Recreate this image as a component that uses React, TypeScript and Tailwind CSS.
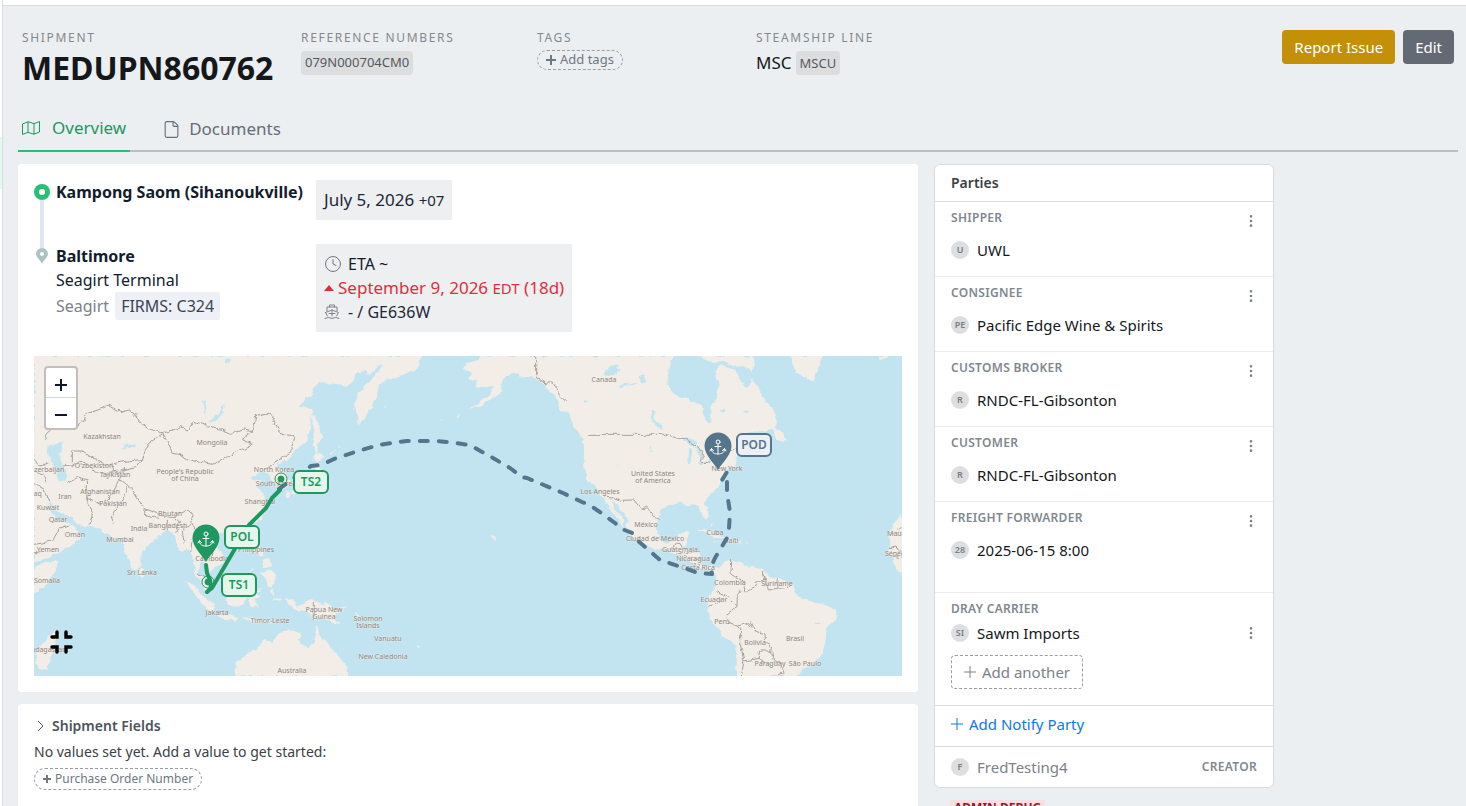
import { ReactNode } from "react";
import { Clock, EllipsisVertical, File } from "lucide-react";

const parties = [
  { role: "Shipper", initials: "U", name: "UWL" },
  { role: "Consignee", initials: "PE", name: "Pacific Edge Wine & Spirits" },
  { role: "Customs Broker", initials: "R", name: "RNDC-FL-Gibsonton" },
  { role: "Customer", initials: "R", name: "RNDC-FL-Gibsonton" },
  { role: "Freight Forwarder", initials: "28", name: "2025-06-15 8:00", tall: true },
];

// Geography is drawn on a 2604 x 960 grid, three units to a map pixel
const land = [
  // Eurasia
  "M-20,-20 1163,-20 1163,5 1158,28 1120,50 1078,67 1038,82 1028,107 1026,132 1013,150 993,187 975,207 968,177 963,142 973,107 993,87 1018,67 1038,42 1046,25 1028,32 1008,57 993,42 973,50 958,77 938,88 888,82 850,82 825,122 795,152 835,160 832,187 828,222 815,257 785,282 762,312 735,325 725,332 745,347 770,372 765,390 735,405 720,385 708,362 690,345 672,350 660,357 650,368 680,372 668,392 688,412 702,437 692,462 680,490 660,500 630,515 600,525 560,532 545,547 545,572 570,597 568,620 545,637 530,647 520,630 505,617 495,627 492,650 505,667 518,680 530,707 512,697 497,670 483,652 480,620 470,585 455,580 440,587 432,560 415,530 400,520 385,535 368,547 345,565 325,580 320,628 303,647 288,625 268,570 262,545 245,558 228,535 210,530 200,515 165,510 130,508 118,490 100,487 90,492 110,505 145,535 125,560 85,582 40,607 -20,620Z",
  // Horn of Africa, Madagascar, Sri Lanka
  "M-20,640 20,622 72,617 65,645 40,680 -20,737Z",
  "M60,822 68,847 50,902 38,937 15,940 5,915 12,880 35,850Z",
  "M318,637 332,652 325,667 315,655Z",
  // Indonesia and the Philippines
  "M450,669 480,687 510,722 540,745 540,767 520,760 490,722 465,692Z",
  "M540,770 580,777 612,787 600,794 550,782Z",
  "M575,702 600,690 620,665 640,692 640,710 625,747 600,752 580,742Z",
  "M650,702 690,699 660,710 680,722 665,728 675,757 662,745 655,762 645,737Z",
  "M625,787 700,792 718,797 690,801 630,794Z",
  "M718,802 745,787 755,785 730,804Z",
  "M712,690 720,700 716,722 710,710Z",
  "M715,728 740,728 735,735 716,733Z",
  "M648,540 672,540 676,570 692,598 680,602 660,588 650,568Z",
  "M680,650 710,640 725,655 722,685 705,690 695,668Z",
  "M685,612 702,608 712,628 692,634Z",
  "M662,630 640,655 634,662 650,638Z",
  "M755,727 780,732 790,752 830,732 880,747 908,772 898,782 923,807 905,805 870,790 840,790 820,765 785,762 765,745Z",
  "M903,762 932,755 938,747 930,767 908,768Z",
  "M962,770 976,780 972,784 960,774Z",
  "M1000,795 1010,800 1006,804Z",
  "M1150,868 1162,866 1158,874 1150,874Z",
  // Australia
  "M605,980 605,917 625,902 665,882 690,852 715,857 735,832 765,822 800,832 795,855 825,877 840,857 848,810 862,842 885,867 918,905 942,938 942,980Z",
  // Japan, Sakhalin and the Kurils
  "M835,175 848,180 856,215 862,240 852,265 850,290 843,285 842,240 836,205Z",
  "M845,288 872,305 850,318 835,312Z",
  "M848,328 858,345 850,380 830,400 795,412 770,410 775,400 810,388 835,365Z",
  "M752,405 770,410 765,428 755,424Z",
  "M888,290 902,280 905,284 890,293Z",
  "M912,275 920,270 922,273 914,279Z",
  // The Americas
  "M1335,-20 1335,12 1298,22 1290,42 1313,47 1303,67 1328,72 1326,90 1358,94 1378,87 1368,115 1338,137 1303,160 1345,148 1380,125 1405,107 1398,82 1418,62 1438,50 1458,60 1488,67 1518,72 1545,102 1568,132 1580,165 1600,167 1615,205 1640,240 1650,255 1650,292 1648,332 1660,372 1690,407 1708,425 1723,446 1745,486 1772,512 1765,485 1745,460 1730,430 1755,450 1783,495 1778,510 1790,540 1828,567 1868,580 1900,582 1948,600 1975,622 1993,640 2018,645 2038,642 2048,652 2046,672 2046,690 2025,720 2018,762 2030,780 2058,835 2110,874 2105,980 2295,980 2295,955 2310,938 2345,922 2365,892 2375,850 2378,815 2408,790 2410,770 2385,750 2348,740 2318,732 2288,720 2278,697 2268,680 2240,668 2205,660 2188,640 2145,632 2128,622 2100,612 2085,615 2065,622 2055,640 2035,630 2005,630 1998,610 1998,587 1970,587 1948,575 1955,560 1970,535 1963,527 1935,532 1930,552 1893,562 1873,547 1865,512 1875,485 1878,460 1908,447 1935,442 1958,447 1973,445 1998,455 2006,480 2018,497 2024,478 2020,455 2013,437 2028,415 2055,390 2063,372 2068,350 2105,328 2110,290 2150,262 2170,262 2155,248 2125,248 2140,232 2188,228 2213,222 2235,218 2258,252 2248,260 2225,248 2220,228 2231,192 2223,172 2198,137 2173,95 2156,67 2140,97 2118,72 2103,42 2058,27 2043,37 2053,85 2048,130 2028,157 2035,195 2023,205 2008,180 2003,147 1958,130 1923,115 1900,85 1900,60 1910,25 1930,-20Z",
  "M1985,-20 2158,-20 2158,48 2130,30 2100,32 2080,18 2040,20 2010,10Z",
  "M2268,-20 2270,10 2285,50 2333,74 2345,60 2358,25 2363,-20Z",
  "M2520,-20 2568,-20 2560,5 2540,8Z",
  "M1986,524 2013,516 2058,537 2083,547 2050,546 2015,528Z",
  "M2085,549 2118,553 2120,562 2085,560Z",
  "M2040,558 2052,560 2044,563Z",
  "M2132,557 2146,558 2140,561Z",
  "M2028,500 2032,508 2038,502Z",
  "M1372,536 1386,544 1378,552Z",
  // Aleutians
  "M1266,180 1282,172 1288,168 1270,184Z",
  "M1216,192 1224,190 1222,194Z",
  "M1052,148 1058,154 1054,156Z",
  // West Africa
  "M2624,455 2604,470 2583,497 2565,532 2570,562 2563,582 2578,615 2600,650 2624,660Z",
].join(" ");

const lakes = [
  "M40,272 60,262 88,262 85,280 72,290 85,322 97,342 95,378 75,377 65,350 58,325 45,300Z",
  "M45,437 65,462 90,478 118,484 118,494 95,500 75,497 60,480 47,455Z",
  "M572,142 570,165 548,195 525,200 553,175Z",
  "M265,280 275,266 310,266 305,274 278,272 268,282Z",
  "M505,132 511,132 516,170 511,172Z",
  "M327,258 337,258 333,266Z",
  "M573,12 592,10 586,24 574,22Z",
  "M1943,252 1960,244 1990,258 1985,270 1965,264Z",
  "M1962,275 1975,285 1968,322 1960,318Z",
  "M1985,270 2003,285 2000,305 1992,290Z",
  "M1993,322 2025,312 2028,316 2000,328Z",
  "M1850,160 1858,160 1864,195 1884,210 1886,218 1868,212 1855,190Z",
  "M1848,268 1853,268 1851,292 1847,290Z",
  "M1710,55 1730,30 1755,25 1748,38 1765,42 1730,58Z",
  "M1750,95 1775,82 1790,80 1785,90 1758,100Z",
  "M1648,135 1658,132 1656,140Z",
  "M1745,325 1752,335 1748,334Z",
  "M1815,60 1828,55 1838,85 1822,80Z",
  "M1780,92 1810,80 1800,90Z",
  "M2055,162 2070,160 2065,172Z",
  "M2125,165 2150,162 2140,172Z",
  "M2340,805 2360,796 2350,808Z",
].join(" ");

const borders = [
  "M1505,0V67L1518,67 1538,90 1550,77 1565,95 1583,125 1598,137",
  "M1656,235H1898L1930,247 1955,247 1990,270 2005,290 2003,320 2030,318 2065,295 2105,278",
  "M1710,420 1735,423 1760,433 1800,432 1820,457 1840,452 1865,485 1878,490",
  "M385,232 440,215 460,222 480,195 520,212 560,220 590,232 630,222 655,227 625,250 658,262 600,292 535,325 480,315 415,290 400,258 385,232",
  "M655,227 662,180 690,172 715,182 735,228 785,245 768,290 715,325 700,337",
  "M50,222 38,232 40,252 M130,210 150,195 160,170 225,147 262,168 290,162 320,200 350,220 385,232 345,258 325,310 260,318 215,328 180,308 150,285 115,285V325L90,330",
  "M115,325 150,318 180,345 215,355 250,345M0,310 20,330 40,325M0,345 30,355 40,380M215,328 240,335 235,355 270,340",
  "M325,310 305,335 265,345 255,372 285,385 310,425 330,458 375,475 420,482 450,462 478,475 470,500 490,535 510,522 548,522",
  "M330,458 335,475 375,487M400,492V520M420,490 440,500 425,530M470,500 445,525 450,560M490,535 505,560 540,570 535,600",
  "M470,585 475,550 490,535M505,617 510,590 535,590",
  "M100,380 130,365 158,375 155,425 175,475 168,505M155,425 200,445 235,415 255,372M285,385 260,440 232,480 240,500",
  "M0,380 30,400 45,437M0,565 55,555 75,520 105,510M0,590 20,590",
  "M490,650 510,665M575,720 600,712 625,712M838,738V790",
  "M1913,582 1925,562 1938,562 1945,575M1930,590 1965,590 1998,590M1950,598 1975,610 1998,605M1975,622 1998,630",
  "M2090,612 2088,650 2125,672 2140,707 2168,692 2160,682 2193,672 2188,645 2203,702 2228,697 2258,695 2268,682M2228,697 2230,670",
  "M2140,707 2113,705 2112,752 2080,722 2048,707M2023,752 2040,745 2070,725M2112,752 2080,775 2080,800 2110,810 2148,800 2158,822 2193,837 2195,857 2215,870 2213,885 2180,885 2175,907 2130,915 2120,870 2120,822 2110,810",
  "M2213,885 2218,915 2240,925 2250,950 2235,960M2175,907 2210,930M2130,915 2122,960",
  "M2604,510 2590,520M2570,532H2604M2565,575 2590,570 2600,590M2570,600 2600,605",
].join(" ");

const places: [number, number, string][] = [
  [68, 83, "Kazakhstan"],
  [178, 89, "Mongolia"],
  [151, 118, "People's Republic"],
  [151, 125, "of China"],
  [240, 116, "North Korea"],
  [242, 130, "South Korea"],
  [226, 148, "Shanghai"],
  [60, 112, "O'zbekiston"],
  [81, 121, "Tajikistan"],
  [66, 138, "Afghanistan"],
  [79, 150, "Pakistan"],
  [31, 143, "Iran"],
  [13, 116, "Azerbaijan"],
  [1, 140, "Iraq"],
  [14, 154, "Kuwait"],
  [24, 166, "Qatar"],
  [41, 181, "Oman"],
  [14, 196, "Yemen"],
  [13, 227, "Somalia"],
  [105, 175, "India"],
  [86, 186, "Mumbai"],
  [134, 172, "Bangladesh"],
  [136, 160, "Bhutan"],
  [108, 219, "Sri Lanka"],
  [178, 205, "Cambodia"],
  [222, 196, "Philippines"],
  [183, 259, "Jakarta"],
  [236, 267, "Timor-Leste"],
  [290, 256, "Papua New"],
  [290, 263, "Guinea"],
  [334, 265, "Solomon"],
  [334, 272, "Islands"],
  [354, 285, "Vanuatu"],
  [349, 303, "New Caledonia"],
  [258, 317, "Australia"],
  [11, 296, "Madagascar"],
  [570, 26, "Canada"],
  [566, 138, "Los Angeles"],
  [619, 120, "United States"],
  [619, 127, "of America"],
  [693, 115, "New York"],
  [612, 171, "México"],
  [621, 185, "Ciudad de México"],
  [646, 196, "Guatemala"],
  [659, 205, "Nicaragua"],
  [664, 214, "Costa Rica"],
  [681, 179, "Cuba"],
  [697, 187, "Haïti"],
  [696, 229, "Colombia"],
  [743, 230, "Suriname"],
  [680, 246, "Ecuador"],
  [688, 268, "Perú"],
  [721, 289, "Bolivia"],
  [761, 285, "Brasil"],
  [736, 310, "Paraguay"],
  [771, 310, "São Paulo"],
  [871, 180, "Mauritania"],
  [864, 200, "Sénégal"],
];

const stops = [
  { code: "TS2", x: 259, y: 114, stroke: "#1e985f", fill: "#e4f7ed" },
  { code: "POL", x: 190, y: 169, stroke: "#1e985f", fill: "#e4f7ed" },
  { code: "TS1", x: 187, y: 217, stroke: "#1e985f", fill: "#e4f7ed" },
  { code: "POD", x: 702, y: 77, stroke: "#55758c", fill: "#ecf0f6" },
];

function PlusIcon({ size, weight }: { size: number; weight: number }) {
  return (
    <svg
      width={size}
      height={size}
      viewBox={`0 0 ${size} ${size}`}
      stroke="currentColor"
      strokeWidth={weight}
      className="shrink-0"
    >
      <path d={`M0,${size / 2}H${size}M${size / 2},0V${size}`} />
    </svg>
  );
}

function MapIcon() {
  return (
    <svg
      width="18"
      height="14"
      viewBox="0 0 18 14"
      fill="none"
      stroke="currentColor"
      strokeLinejoin="round"
    >
      <path d="M0.5,3 6,0.8 12,2.6 17.5,0.6V11L12,13.2 6,11.4 0.5,13.4ZM6,0.8V11.4M12,2.6V13.2" />
    </svg>
  );
}

function ShipIcon() {
  return (
    <svg
      width="16"
      height="16"
      viewBox="0 0 16 16"
      fill="none"
      stroke="#7c848b"
      strokeLinecap="round"
      strokeLinejoin="round"
    >
      <path d="M5.5,3V1H10.5V3M3,7V3H13V7M8,6V12M1.5,8.5 8,6 14.5,8.5 12.5,12M1.5,8.5 3.5,12M5,9.5H11M1,14.5C2,14.5 3,13.5 4.5,13.5C6,13.5 6.5,14.5 8,14.5C9.5,14.5 10,13.5 11.5,13.5C13,13.5 14,14.5 15,14.5" />
    </svg>
  );
}

function AnchorPin({ x, y, color }: { x: number; y: number; color: string }) {
  return (
    <g transform={`translate(${x} ${y})`}>
      <path
        d="M0,24C-3,18 -13.5,9 -13.5,0A13.5,13.5 0 0 1 13.5,0C13.5,9 3,18 0,24Z"
        fill={color}
      />
      <g
        fill="none"
        stroke="white"
        strokeLinecap="round"
        strokeLinejoin="round"
      >
        <circle cx="0" cy="-4" r="2" />
        <path d="M0,-2V8M-3,0.5H3M-6.5,3C-6.5,6.5 -4,8 0,8C4,8 6.5,6.5 6.5,3M-8,5 -6.5,2.5 -4.5,4.5M8,5 6.5,2.5 4.5,4.5" />
      </g>
    </g>
  );
}

function RouteMap() {
  return (
    <div className="relative mt-6 h-80 overflow-hidden bg-[#c1e4f0]">
      <svg
        viewBox="0 0 868 320"
        preserveAspectRatio="xMidYMid slice"
        className="block h-full w-full"
        role="img"
        aria-label="Shipment route"
      >
        <defs>
          <filter id="coast" x="0" y="0" width="1" height="1">
            <feTurbulence type="fractalNoise" baseFrequency="0.12" numOctaves="3" seed="4" />
            <feDisplacementMap in="SourceGraphic" scale="6" xChannelSelector="R" yChannelSelector="G" />
          </filter>
        </defs>
        <g filter="url(#coast)">
          <svg viewBox="0 0 2604 960" width="868" height="320">
            <rect width="2604" height="960" fill="#c1e4f0" />
            <path d={land} fill="#f2ede7" />
            <path d={lakes} fill="#c1e4f0" />
            <path d={borders} fill="none" stroke="#a5a19e" strokeWidth="3" />
          </svg>
        </g>
        <g
          fill="#8d8783"
          stroke="#f2ede7"
          strokeOpacity="0.6"
          strokeWidth="1"
          paintOrder="stroke"
          textAnchor="middle"
          fontSize="7"
        >
          {places.map(([x, y, name]) => (
            <text key={name} x={x} y={y}>
              {name}
            </text>
          ))}
        </g>

        <g fill="none" strokeWidth="4" strokeLinecap="round" strokeLinejoin="round">
          <path
            d="M245,133 252,128 263,120 277,110 287,109 300,103 324,95 345,89 364,86 373,85 403,85 421,87 436,89 441,92 459,102 476,112 488,121 493,122 529,137 548,146 556,149 581,167 588,173 598,177 603,184 618,197 626,204 653,213 664,217 678,218 677,211 681,202 693,182 695,172 696,156 693,137 693,116 688,124 684,116"
            stroke="#55758c"
            strokeDasharray="8 11"
          />
          <path
            d="M172,209 173,217 176,224 177,232 173,236 M173,236 178,232 202,191 215,169 232,152 238,142 246,134"
            stroke="#1e985f"
          />
        </g>
        <g stroke="#1e985f" fill="none">
          <circle cx="174" cy="226" r="6" />
          <circle cx="174" cy="226" r="3" fill="#1e985f" />
          <circle cx="247" cy="123" r="6" />
          <circle cx="247" cy="123" r="3" fill="#1e985f" />
        </g>
        <AnchorPin x={172} y={182} color="#1e985f" />
        <AnchorPin x={684} y={90} color="#55758c" />
        {stops.map((stop) => (
          <g key={stop.code}>
            <rect
              x={stop.x + 1}
              y={stop.y + 1}
              width="34"
              height="22"
              rx="5"
              fill={stop.fill}
              stroke={stop.stroke}
              strokeWidth="2"
            />
            <text
              x={stop.x + 18}
              y={stop.y + 16}
              textAnchor="middle"
              fontSize="12"
              fontWeight="600"
              fill={stop.stroke}
            >
              {stop.code}
            </text>
          </g>
        ))}
      </svg>

      <div className="absolute top-2.5 left-2.5 flex flex-col rounded border-2 border-[#c2bebb] bg-white text-slate-900">
        <button
          type="button"
          aria-label="Zoom in"
          className="flex h-[30px] w-[30px] items-center justify-center border-b border-gray-300 pt-1"
        >
          <PlusIcon size={12} weight={2} />
        </button>
        <button
          type="button"
          aria-label="Zoom out"
          className="flex h-[30px] w-[30px] items-center justify-center pt-1"
        >
          <svg width="12" height="2" viewBox="0 0 12 2">
            <path d="M0,1H12" stroke="currentColor" strokeWidth="2" />
          </svg>
        </button>
      </div>
      <button type="button" aria-label="Exit full screen" className="absolute bottom-[22px] left-4">
        <svg
          width="23"
          height="24"
          viewBox="0 0 23 24"
          fill="none"
          stroke="black"
          strokeWidth="3.4"
          strokeLinecap="round"
          className="block"
        >
          <path d="M7,2V7H2M16,2V7H21M7,22V17H2M16,22V17H21" />
        </svg>
      </button>
    </div>
  );
}

function HeaderField({ label, children, className }: { label: string; children: ReactNode; className?: string }) {
  return (
    <div className={className}>
      <div className="text-xs leading-4 tracking-[0.14em] whitespace-nowrap text-[#84898e] uppercase">
        {label}
      </div>
      {children}
    </div>
  );
}

function Tag({ children }: { children: ReactNode }) {
  return (
    <span className="flex h-6 items-center rounded bg-[#dcdddf] px-1 text-[13px] text-[#55595e]">
      {children}
    </span>
  );
}

function Avatar({ children }: { children: ReactNode }) {
  return (
    <span className="flex h-[18px] w-[18px] shrink-0 items-center justify-center rounded-full bg-[#dcdee0] text-[9px] font-semibold text-[#767d84]">
      {children}
    </span>
  );
}

function MoreButton({ label }: { label: string }) {
  return (
    <button type="button" aria-label={label} className="-mr-0.5 text-[#7c848b]">
      <EllipsisVertical size={16} strokeWidth={2} className="block" />
    </button>
  );
}

function RouteCard() {
  return (
    <section className="rounded bg-white p-4">
      <div className="flex gap-2.5">
        <div className="w-[272px]">
          <div className="flex h-16 gap-1.5">
            <div className="-mb-1 flex w-4 flex-col items-center pt-1">
              <span className="flex h-4 w-4 shrink-0 items-center justify-center rounded-full bg-[#27c076]">
                <span className="h-1.5 w-1.5 rounded-full bg-white" />
              </span>
              <span className="w-1 flex-1 bg-[#e2e7ef]" />
            </div>
            <div className="text-base leading-6 font-bold whitespace-nowrap">
              Kampong Saom (Sihanoukville)
            </div>
          </div>
          <div className="flex gap-1.5">
            <div className="flex w-4 justify-center pt-1">
              <svg width="12" height="16" viewBox="0 0 12 16">
                <path
                  d="M6,16C5,13 0,9 0,6A6,6 0 0 1 12,6C12,9 7,13 6,16ZM6,4A2,2 0 1 0 6,8A2,2 0 1 0 6,4Z"
                  fill="#aec2c5"
                  fillRule="evenodd"
                />
              </svg>
            </div>
            <div className="text-base leading-6">
              <div className="font-bold">Baltimore</div>
              <div>Seagirt Terminal</div>
              <div className="flex items-center text-[#7b8289]">
                Seagirt
                <span className="ml-1.5 flex h-7 items-center rounded-xs bg-[#edf1f7] px-1.5 text-[#3a4453]">
                  FIRMS: C324
                </span>
              </div>
            </div>
          </div>
        </div>
        <div className="flex flex-col items-start text-[17px] leading-6 whitespace-nowrap">
          <div className="bg-[#eeeff1] p-2 text-[#1d2738]">
            July 5, 2026 <span className="text-[15px]">+07</span>
          </div>
          <div className="mt-6 bg-[#eeeff1] p-2">
            <div className="flex items-center gap-1.5 text-base leading-6">
              <Clock size={18} strokeWidth={1.3} className="text-[#6d747b]" />
              ETA ~
            </div>
            <div className="flex items-center gap-1 text-[#dc2f3b]">
              <svg width="10" height="6" viewBox="0 0 10 6">
                <path d="M0,6 5,0 10,6Z" fill="currentColor" />
              </svg>
              <span>
                September 9, 2026 <span className="text-[15px]">EDT</span> (18d)
              </span>
            </div>
            <div className="flex items-center gap-2 text-base leading-6 text-[#1d2738]">
              <ShipIcon />- / GE636W
            </div>
          </div>
        </div>
      </div>
      <RouteMap />
    </section>
  );
}

function ShipmentFields() {
  return (
    <section className="mt-3 min-h-32 rounded bg-white px-4 pt-2.5 pb-4">
      <details>
        <summary className="flex list-none items-center gap-2 text-sm leading-6 font-semibold text-[#4b545c]">
          <svg width="10" height="12" viewBox="0 0 10 12" fill="none" stroke="currentColor">
            <path d="M4,1 9,6 4,11" />
          </svg>
          Shipment Fields
        </summary>
      </details>
      <p className="mt-0.5 text-sm leading-6 text-[#3c4146]">
        No values set yet. Add a value to get started:
      </p>
      <button
        type="button"
        className="mt-1 flex h-[22px] items-center gap-1 rounded-full border border-dashed border-[#999ea3] px-2 text-xs text-[#6f7880]"
      >
        <PlusIcon size={8} weight={2} />
        Purchase Order Number
      </button>
    </section>
  );
}

function RoleLabel({ children }: { children: ReactNode }) {
  return (
    <h3 className="text-xs leading-4 font-semibold tracking-wide text-[#7f888f] uppercase">
      {children}
    </h3>
  );
}

function PartiesCard() {
  return (
    <section className="rounded-md border border-[#d9dcdf] bg-white text-[15px]">
      <h2 className="h-[37px] border-b border-[#d9dcdf] px-4 text-sm leading-9 font-semibold text-[#3c4146]">
        Parties
      </h2>
      {parties.map((party) => (
        <div
          key={party.role}
          className={`flex justify-between border-b border-[#ececee] px-4 pt-2 ${
            party.tall ? "h-[91px]" : "h-[75px]"
          }`}
        >
          <div>
            <RoleLabel>{party.role}</RoleLabel>
            <div className="mt-3 flex items-center gap-2 leading-6 text-[#15181b]">
              <Avatar>{party.initials}</Avatar>
              {party.name}
            </div>
          </div>
          <div className="pt-0.5">
            <MoreButton label={`${party.role} options`} />
          </div>
        </div>
      ))}
      <div className="border-b border-[#d9dcdf] px-4 py-2">
        <RoleLabel>Dray Carrier</RoleLabel>
        <div className="mt-1 flex items-center gap-2 leading-6 text-[#15181b]">
          <Avatar>SI</Avatar>
          <span className="flex-1">Sawm Imports</span>
          <MoreButton label="Dray carrier options" />
        </div>
        <button
          type="button"
          className="mt-2.5 mb-2 flex h-[34px] items-center gap-1.5 rounded-sm border border-dashed border-[#999ea3] px-3 text-[#7b8289]"
        >
          <PlusIcon size={12} weight={1} />
          Add another
        </button>
      </div>
      <div className="flex h-[41px] items-center border-b border-[#d9dcdf] px-4 pb-1">
        <button type="button" className="flex items-center gap-1.5 text-[#0f75f0]">
          <PlusIcon size={12} weight={1} />
          Add Notify Party
        </button>
      </div>
      <div className="flex h-10 items-center gap-2 px-4 text-[#7b8289]">
        <Avatar>F</Avatar>
        <span className="flex-1">FredTesting4</span>
        <RoleLabel>Creator</RoleLabel>
      </div>
    </section>
  );
}

export default function App() {
  return (
    <div className="flex h-screen overflow-hidden bg-[#ebeff2] font-['Noto_Sans','Open_Sans',sans-serif] text-[#131c2d]">
      <aside className="w-[3px] shrink-0 border-r border-[#d9dcdf] bg-white">
        <div className="mt-[137px] h-[52px] bg-[#e4f9ef]" />
      </aside>
      <div className="min-w-0 flex-1">
        <div className="h-1.5 border-b border-[#d9dcdf] bg-white" />

        <header className="flex h-[84px] items-start px-[19px] pt-6 pr-3">
          <HeaderField label="Shipment" className="w-[279px] shrink-0">
            <h1 className="text-[32px] leading-11 font-bold text-[#15181b]">
              MEDUPN860762
            </h1>
          </HeaderField>
          <HeaderField label="Reference Numbers" className="w-[236px] shrink-0">
            <div className="mt-[5px] flex">
              <Tag>079N000704CM0</Tag>
            </div>
          </HeaderField>
          <HeaderField label="Tags" className="w-[219px] shrink-0">
            <button
              type="button"
              className="mt-1 flex h-5 items-center gap-1 rounded-full border border-dashed border-[#999ea3] px-2 text-[13px] text-[#6f7880]"
            >
              <PlusIcon size={10} weight={2} />
              Add tags
            </button>
          </HeaderField>
          <HeaderField label="Steamship Line">
            <div className="mt-[5px] flex items-center gap-1 text-[17px] leading-6 text-[#15181b]">
              MSC <Tag>MSCU</Tag>
            </div>
          </HeaderField>
          <div className="ml-auto flex gap-2 text-[15px] text-white">
            <button type="button" className="h-[34px] rounded bg-[#c39007] px-3">
              Report Issue
            </button>
            <button type="button" className="h-[34px] rounded bg-[#636a73] px-3">
              Edit
            </button>
          </div>
        </header>

        <nav className="mt-4 mr-2 ml-[15px] flex h-[46px] border-b-2 border-[#b9bfc3] text-[17px]">
          <a
            href="#overview"
            className="-mb-0.5 flex items-center gap-3 border-b-2 border-[#27c076] px-1 text-[#1e985f]"
          >
            <MapIcon />
            Overview
          </a>
          <a
            href="#documents"
            className="-mb-0.5 ml-7 flex items-center gap-2 px-1 text-[#666e76]"
          >
            <File size={19} strokeWidth={1.4} />
            Documents
          </a>
        </nav>

        <main className="mt-3 mr-2 ml-[15px] flex items-start gap-4">
          <div className="w-[900px] max-w-[63%] shrink">
            <RouteCard />
            <ShipmentFields />
          </div>
          <aside className="w-[340px] shrink-0">
            <PartiesCard />
            <div className="mt-3 ml-4 flex">
              <span className="bg-[#f9dfe1] px-1 text-xs leading-4 font-bold text-[#8c1d26]">
                ADMIN DEBUG
              </span>
            </div>
          </aside>
        </main>
      </div>
    </div>
  );
}
